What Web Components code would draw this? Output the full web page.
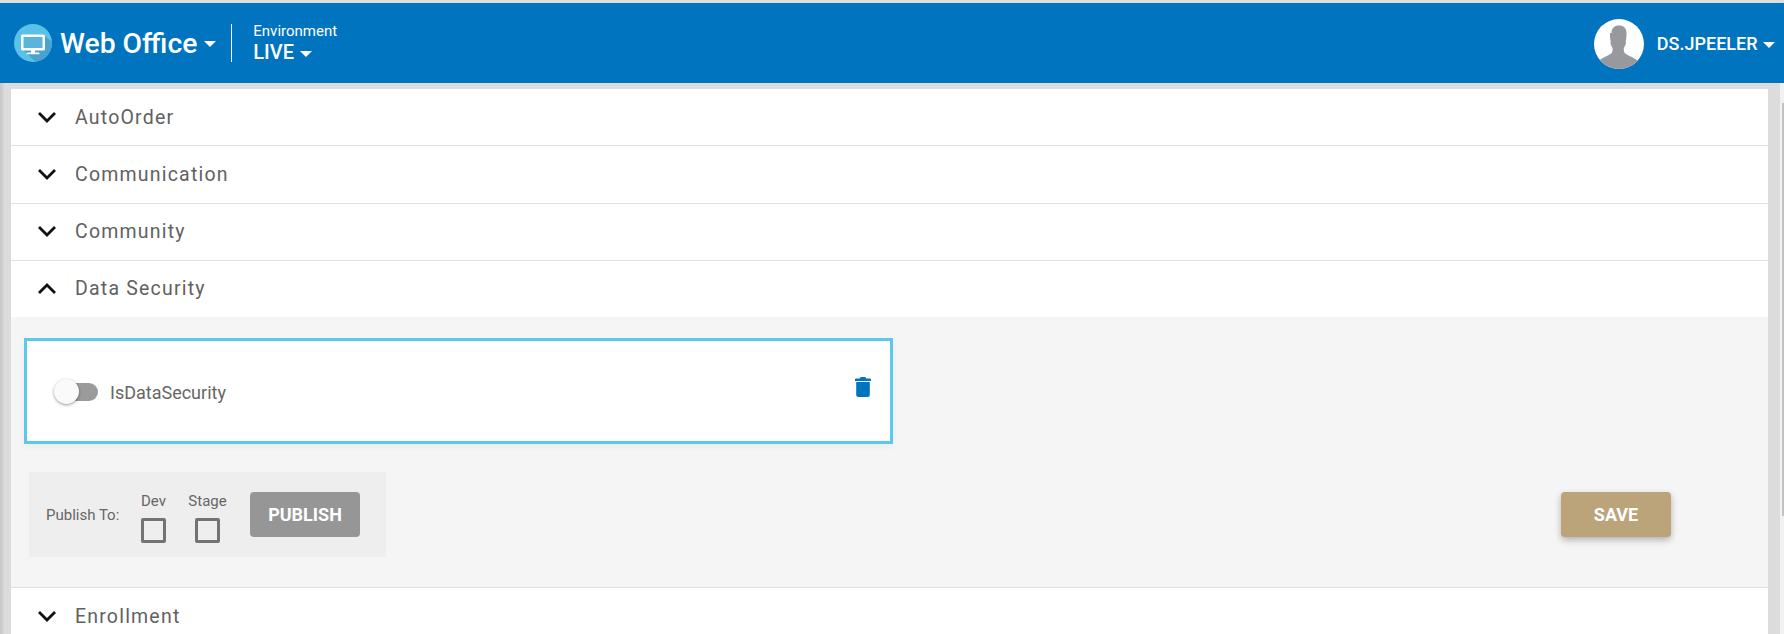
<!DOCTYPE html>
<html>
<head>
<meta charset="utf-8">
<title>Web Office</title>
<style>
  html, body { margin: 0; height: 634px; overflow: hidden; background: #dedede; }
  body { font-family: Roboto, "Liberation Sans", sans-serif; }
</style>
</head>
<body>
<app-shell>
  <app-header slot="header"></app-header>
  <accordion-row label="AutoOrder"></accordion-row>
  <accordion-row label="Communication"></accordion-row>
  <accordion-row label="Community"></accordion-row>
  <accordion-row label="Data Security" open>
    <setting-card label="IsDataSecurity"></setting-card>
    <div style="display:flex;justify-content:space-between;align-items:flex-start;padding:28px 97px 0 5px">
      <publish-bar></publish-bar>
      <app-button kind="save" style="margin-top:20px">SAVE</app-button>
    </div>
  </accordion-row>
  <accordion-row label="Enrollment"></accordion-row>
</app-shell>

<script>
// Shell: grey top edge, header, then the panel between the gutters
class AppShell extends HTMLElement {
  constructor() {
    super();
    this.attachShadow({ mode: 'open' });
    this.shadowRoot.innerHTML = `
      <style>
        :host { display: flex; flex-direction: column; height: 634px; overflow: hidden; background: #dedede; padding-top: 3px; box-sizing: border-box; }
        .body { display: flex; flex: 1; min-height: 0; }
        .main { flex: 1; min-width: 0; padding: 6px 12px 0 11px; background: linear-gradient(90deg, #c8c8c8 0, #d0d0d0 3px, #dcdcdc 4px) 0 0 no-repeat, #dcdcdc; overflow: hidden; }
        .panel { background: #fff; height: 100%; overflow: hidden; }
        .track { flex: none; width: 4px; background: #f1f1f1; }
        .thumb { width: 2px; height: 413px; margin: 20px 0 0 2px; background: #c1c1c1; }
      </style>
      <slot name="header"></slot>
      <div class="body">
        <div class="main"><div class="panel"><slot></slot></div></div>
        <div class="track"><div class="thumb"></div></div>
      </div>
    `;
  }
}

class AppHeader extends HTMLElement {
  constructor() {
    super();
    this.attachShadow({ mode: 'open' });
    this.shadowRoot.innerHTML = `
      <style>
        :host { display: flex; flex: none; align-items: center; height: 80px; background: #0074bf; color: #fff; padding: 0 9px 0 14px; box-sizing: border-box; }
        .logo { width: 38px; height: 38px; flex: none; display: block; }
        .title { font-size: 28.300px; font-weight: 500; margin: 1px 0 0 8px; line-height: 38px; white-space: nowrap; display: flex; align-items: center; }
        .caret { display: inline-block; width: 0; height: 0; border: 6px solid transparent; border-top: 6px solid #fff; border-bottom: 0; vertical-align: middle; }
        .title .caret { margin-left: 7px; }
        .divider { width: 1px; height: 38px; background: #fff; margin: 0 21px 0 15px; flex: none; }
        .env { display: flex; flex-direction: column; }
        .env small { font-size: 15px; line-height: 18px; }
        .env b { font-size: 20px; font-weight: 500; line-height: 24px; }
        .env .caret { margin-left: 1px; }
        .user { margin: 1px 0 0 auto; display: flex; align-items: center; }
        .avatar { width: 50px; height: 50px; display: block; flex: none; }
        .name { font-size: 18px; font-weight: 500; margin-left: 13px; white-space: nowrap; }
        .name .caret { margin-left: 1px; }
      </style>
      <svg class="logo" viewBox="0 0 38 38">
        <defs><clipPath id="c"><circle cx="19" cy="19" r="19"/></clipPath></defs>
        <circle cx="19" cy="19" r="19" fill="#5bc2e7"/>
        <path clip-path="url(#c)" d="M10 27 L29 10 L40 20 V40 H24 Z" fill="#4aa3cf"/>
        <path d="M8.500 10.500h21a1.500 1.500 0 0 1 1.500 1.500v13a1.500 1.500 0 0 1-1.500 1.500h-21a1.500 1.500 0 0 1-1.500-1.500v-13a1.500 1.500 0 0 1 1.500-1.500z" fill="#fff"/>
        <rect x="9.500" y="13" width="19" height="11" fill="#5bb4dc"/>
        <rect x="17" y="26" width="4" height="3" fill="#fff"/>
        <rect x="12.500" y="28.500" width="13" height="1.800" rx=".9" fill="#fff"/>
      </svg>
      <span class="title">Web Office<span class="caret"></span></span>
      <span class="divider"></span>
      <div class="env"><small>Environment</small><b>LIVE <span class="caret"></span></b></div>
      <div class="user">
        <svg class="avatar" viewBox="0 0 50 50">
          <defs><clipPath id="a"><circle cx="25" cy="25" r="25"/></clipPath></defs>
          <circle cx="25" cy="25" r="25" fill="#fff"/>
          <path clip-path="url(#a)" d="M17.500 14c0-5 3-7.500 7.500-7.500s7.500 2.500 7.500 7.500c0 3 0 6-.8 8-.4 1 .6 1 .2 2.500-.5 2-1.400 3-2 4.500-.3 1 0 3.500.5 4.500 1.500 2.500 9 4.500 13 8 2 2 3 5 3 9H2c0-4 1-7 3-9 4-3.500 11.500-5.500 13-8 .5-1 .8-3.500.5-4.500-.6-1.500-1.500-2.500-2-4.500-.4-1.500.6-1.500.2-2.500-.8-2-.7-5-.7-8z" fill="#98999c"/>
        </svg>
        <span class="name">DS.JPEELER <span class="caret"></span></span>
      </div>
    `;
  }
}

// One section of the accordion; slotted content only shows when open
class AccordionRow extends HTMLElement {
  constructor() {
    super();
    this.attachShadow({ mode: 'open' });
  }

  connectedCallback() {
    const open = this.hasAttribute('open');
    const chevron = open ? 'M2 12 L10 4 L18 12' : 'M2 3 L10 11 L18 3';
    this.shadowRoot.innerHTML = `
      <style>
        :host { display: block; border-bottom: 1px solid #e0e0e0; }
        .head { display: flex; align-items: center; height: 56.250px; padding-left: 26px; }
        svg { width: 20px; height: 15px; flex: none; }
        .label { margin-left: 18px; font-size: 19.500px; letter-spacing: 1.200px; color: #616161; }
        .body { background: #f5f5f5; padding: 21px 0 0 13px; height: 270px; box-sizing: border-box; }
      </style>
      <div class="head">
        <svg viewBox="0 0 20 15"><path d="${chevron}" fill="none" stroke="#111" stroke-width="2.800"/></svg>
        <span class="label">${this.getAttribute('label')}</span>
      </div>
      ${open ? '<div class="body"><slot></slot></div>' : ''}
    `;
  }
}

class SettingCard extends HTMLElement {
  constructor() {
    super();
    this.attachShadow({ mode: 'open' });
  }

  connectedCallback() {
    this.shadowRoot.innerHTML = `
      <style>
        :host { display: flex; align-items: center; width: 869px; height: 106px; box-sizing: border-box; background: #fff; border: 3px solid #5bc8ec; padding: 1px 19px 0 27px; box-shadow: 0 3px 6px rgba(0,0,0,.04); }
        .label { font-size: 18px; color: #666; margin-left: 12px; margin-top: 2px; }
        svg { width: 16px; height: 20px; margin: 0 0 9px auto; display: block; }
      </style>
      <toggle-switch></toggle-switch>
      <span class="label">${this.getAttribute('label')}</span>
      <svg viewBox="0 0 16 20"><path d="M5.500 0h5l.6 1.500H15a1 1 0 0 1 1 1V4H0V2.500a1 1 0 0 1 1-1h3.900zM1.200 5h13.600v13a2 2 0 0 1-2 2H3.200a2 2 0 0 1-2-2z" fill="#0074bf"/></svg>
    `;
  }
}

class ToggleSwitch extends HTMLElement {
  constructor() {
    super();
    this.attachShadow({ mode: 'open' });
    this.shadowRoot.innerHTML = `
      <style>
        :host { display: block; position: relative; width: 44px; height: 26px; flex: none; }
        .track { position: absolute; left: 6px; right: 0; top: 4px; height: 18px; border-radius: 9px; background: #9b9b9b; }
        .knob { position: absolute; left: 0; top: 0; width: 25px; height: 25px; border-radius: 50%; background: #fafafa; box-shadow: 0 1px 3px rgba(0,0,0,.4); }
      </style>
      <div class="track"></div>
      <div class="knob"></div>
    `;
  }
}

class AppButton extends HTMLElement {
  constructor() {
    super();
    this.attachShadow({ mode: 'open' });
  }

  connectedCallback() {
    const save = this.getAttribute('kind') === 'save';
    this.shadowRoot.innerHTML = `
      <style>
        :host { display: flex; align-items: center; justify-content: center; width: 110px; height: 45px; flex: none; border-radius: 4px; color: #fff; font-size: 18px; font-weight: 700;
          background: ${save ? '#bba37a' : '#969696'};
          box-shadow: ${save ? '0 3px 7px rgba(0,0,0,.28)' : 'none'}; }
      </style>
      <slot></slot>
    `;
  }
}

class PublishBar extends HTMLElement {
  constructor() {
    super();
    this.attachShadow({ mode: 'open' });
    this.shadowRoot.innerHTML = `
      <style>
        :host { display: flex; align-items: center; width: 357px; height: 85px; box-sizing: border-box; background: #eee; padding-left: 17px; color: #666; font-size: 15px; }
        .to { width: 78px; margin-right: 17px; white-space: nowrap; }
        .opt { display: flex; flex-direction: column; align-items: center; width: 25px; margin-right: 29px; padding-top: 6px; }
        .opt span { line-height: 18px; margin-bottom: 8px; white-space: nowrap; }
        .box { width: 25px; height: 25px; box-sizing: border-box; border: 3px solid #737373; border-radius: 2px; }
        app-button { margin-left: 1px; margin-top: 0; }
      </style>
      <span class="to">Publish To:</span>
      <label class="opt"><span>Dev</span><div class="box"></div></label>
      <label class="opt"><span>Stage</span><div class="box"></div></label>
      <app-button>PUBLISH</app-button>
    `;
  }
}

customElements.define('app-shell', AppShell);
customElements.define('app-header', AppHeader);
customElements.define('accordion-row', AccordionRow);
customElements.define('setting-card', SettingCard);
customElements.define('toggle-switch', ToggleSwitch);
customElements.define('app-button', AppButton);
customElements.define('publish-bar', PublishBar);
</script>
</body>
</html>
